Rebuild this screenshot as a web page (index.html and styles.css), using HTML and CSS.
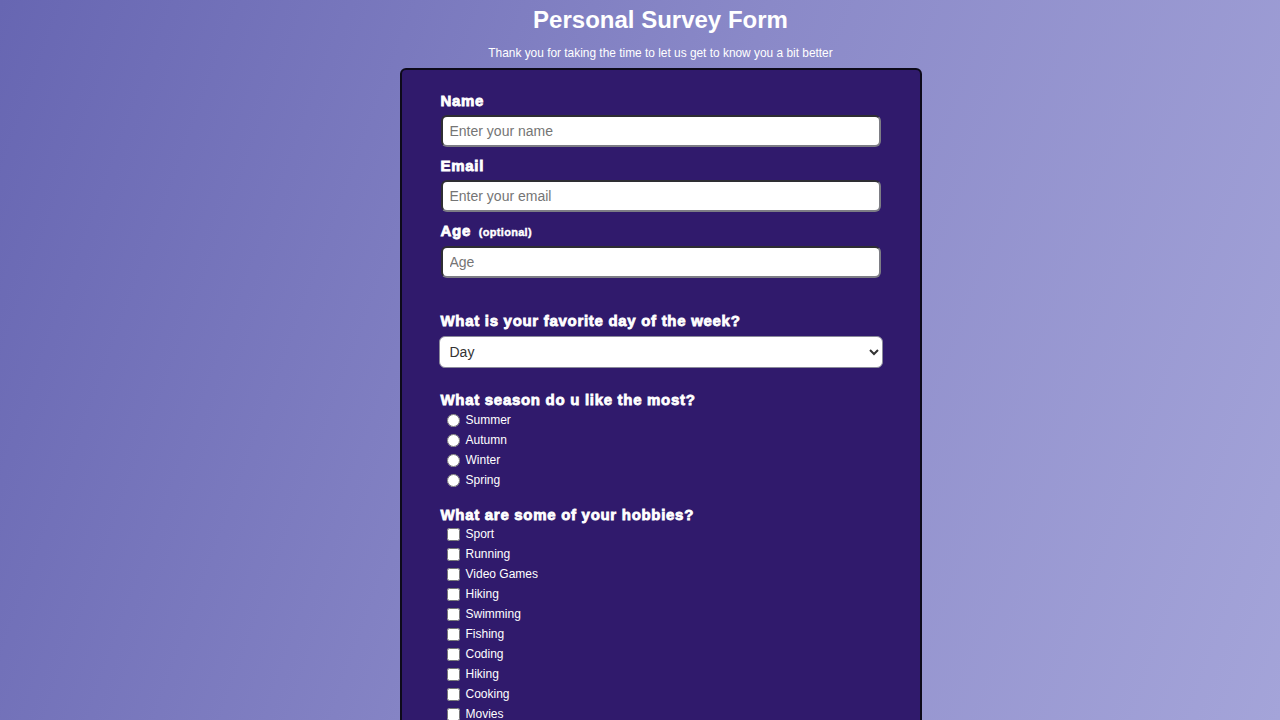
FILE: index.html
```html
<!DOCTYPE html>
<html lang="en">
<head>
<meta charset="utf-8">
<title>Personal Survey Form</title>
<link rel="stylesheet" href="styles.css">
</head>
<body>
<div class="page">
  <header class="header">
    <h1 class="title">Personal Survey Form</h1>
    <p class="subtitle">Thank you for taking the time to let us get to know you a bit better</p>
  </header>
  <form class="card">
    <div class="group">
      <label class="label" for="name">Name</label>
      <input class="field" id="name" type="text" placeholder="Enter your name">
    </div>
    <div class="group">
      <label class="label" for="email">Email</label>
      <input class="field" id="email" type="email" placeholder="Enter your email">
    </div>
    <div class="group">
      <label class="label" for="age">Age <span class="hint">(optional)</span></label>
      <input class="field" id="age" type="number" placeholder="Age">
    </div>

    <div class="group group-spaced">
      <label class="label label-select" for="day">What is your favorite day of the week?</label>
      <select class="select" id="day">
        <option>Day</option>
        <option>Monday</option>
        <option>Tuesday</option>
        <option>Wednesday</option>
        <option>Thursday</option>
        <option>Friday</option>
        <option>Saturday</option>
        <option>Sunday</option>
      </select>
    </div>

    <div class="group group-list">
      <p class="label">What season do u like the most?</p>
      <label class="option"><input type="radio" name="season"> Summer</label>
      <label class="option"><input type="radio" name="season"> Autumn</label>
      <label class="option"><input type="radio" name="season"> Winter</label>
      <label class="option"><input type="radio" name="season"> Spring</label>
    </div>

    <div class="group group-list">
      <p class="label label-tight">What are some of your hobbies?</p>
      <label class="option"><input type="checkbox"> Sport</label>
      <label class="option"><input type="checkbox"> Running</label>
      <label class="option"><input type="checkbox"> Video Games</label>
      <label class="option"><input type="checkbox"> Hiking</label>
      <label class="option"><input type="checkbox"> Swimming</label>
      <label class="option"><input type="checkbox"> Fishing</label>
      <label class="option"><input type="checkbox"> Coding</label>
      <label class="option"><input type="checkbox"> Hiking</label>
      <label class="option"><input type="checkbox"> Cooking</label>
      <label class="option"><input type="checkbox"> Movies</label>
      <label class="option"><input type="checkbox"> Reading</label>
    </div>

    <div class="group">
      <label class="label" for="comments">Any comments or suggestions?</label>
      <textarea class="field area" id="comments" placeholder="Enter your comment here..."></textarea>
    </div>
    <button class="submit" type="submit">Submit</button>
  </form>
</div>
</body>
</html>
```
FILE: styles.css
```css
html, body {
  margin: 0;
  padding: 0;
}
body {
  min-height: 100vh;
  background: linear-gradient(110deg, #6766b2 0%, #8a89c8 50%, #a4a4d9 100%);
  background-attachment: fixed;
  font-family: "Liberation Sans", Arial, sans-serif;
  color: #fff;
}
.page {
  padding-left: 41px;
  display: flex;
  flex-direction: column;
  align-items: center;
}
.header {
  text-align: center;
}
.title {
  margin: 6px 0 0;
  font-size: 24px;
  line-height: 28px;
  font-weight: 700;
}
.subtitle {
  margin: 11px 0 7px;
  font-size: 11.9px;
  line-height: 16px;
}
.card {
  box-sizing: border-box;
  width: 522px;
  background: #301a6c;
  border: 2px solid #0d0a1a;
  border-radius: 6px;
  padding: 22px 39px 40px 39px;
  display: flex;
  flex-direction: column;
}
.group {
  display: flex;
  flex-direction: column;
  margin-bottom: 10px;
}
.group-spaced {
  margin-top: 24px;
  margin-bottom: 23px;
}
.group-list {
  margin-bottom: 16px;
}
.label {
  margin: 0 0 5px;
  font-size: 15px;
  line-height: 18px;
  font-weight: 700;
  -webkit-text-stroke: 0.8px #fff;
  letter-spacing: 0.7px;
}
.label-select {
  margin-bottom: 6px;
}
.group-list .label {
  margin-bottom: 1px;
}
.group-list .label-tight {
  margin-bottom: 0;
}
.hint {
  font-size: 11px;
  -webkit-text-stroke: 0.4px #fff;
  letter-spacing: 0.3px;
  margin-left: 3px;
}
.field {
  box-sizing: border-box;
  width: 440px;
  height: 32px;
  border: 2px solid;
  border-color: #2e2e33 #7d7d85 #7d7d85 #2e2e33;
  border-radius: 6px;
  background: #fff;
  padding: 0 7px;
  font-family: "Liberation Sans", Arial, sans-serif;
  font-size: 14px;
  color: #333;
}
.field::placeholder {
  color: #757575;
}
.area {
  height: 90px;
  padding-top: 8px;
  resize: vertical;
}
.select {
  box-sizing: border-box;
  width: 444px;
  height: 32px;
  margin-left: -2px;
  border: 1px solid #8a8a9a;
  border-radius: 6px;
  background: #fff;
  padding: 0 6px;
  font-family: "Liberation Sans", Arial, sans-serif;
  font-size: 14px;
  color: #333;
}
.option {
  display: flex;
  align-items: center;
  height: 20px;
  font-size: 12px;
  padding-left: 2px;
}
.option input {
  margin: 0 6px 0 4px;
  width: 13px;
  height: 13px;
}
.submit {
  margin-top: 10px;
  height: 40px;
  border: none;
  border-radius: 6px;
  background: #1f9d55;
  color: #fff;
  font-size: 16px;
  font-weight: 700;
  font-family: "Liberation Sans", Arial, sans-serif;
}
```
